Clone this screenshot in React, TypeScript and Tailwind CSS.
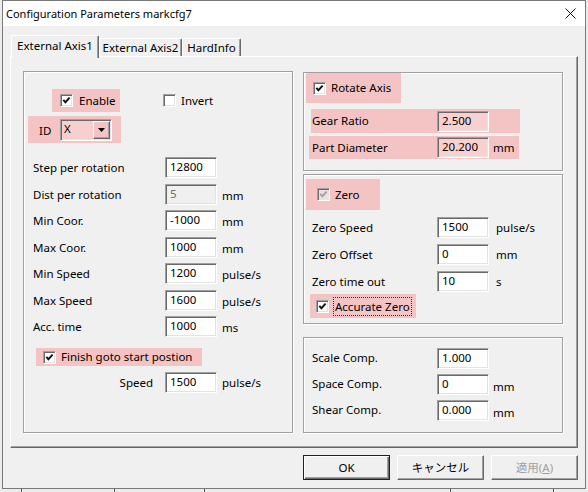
import React from 'react';

const HL = 'bg-[#f4c3c3]';

function Check({ checked = true, disabled = false }: { checked?: boolean; disabled?: boolean }) {
  return (
    <span
      className={`flex h-[13px] w-[13px] shrink-0 items-center justify-center border border-t-[#a0a0a0] border-l-[#a0a0a0] border-b-white border-r-white shadow-[inset_1px_1px_0_#696969,inset_-1px_-1px_0_#e3e3e3] ${
        disabled ? 'bg-[#efdede]' : 'bg-white'
      }`}
    >
      {checked && (
        <svg width="9" height="9" viewBox="0 0 9 9">
          <path d="M1.3 3.8 L3.4 6.2 L7.6 1.6" stroke={disabled ? '#a0a0a0' : '#111'} strokeWidth="1.9" fill="none" />
        </svg>
      )}
    </span>
  );
}

function Edit({ value, disabled = false, pink = false }: { value: string; disabled?: boolean; pink?: boolean }) {
  const bg = pink ? 'bg-[#f9d0d0]' : disabled ? 'bg-[#f0f0f0] text-[#6d6d6d]' : 'bg-white';
  return (
    <div
      className={`h-[21px] w-[52px] shrink-0 border border-t-[#a0a0a0] border-l-[#a0a0a0] border-b-white border-r-white pl-[4px] leading-[18px] shadow-[inset_1px_1px_0_#696969,inset_-1px_-1px_0_#e3e3e3] ${bg}`}
    >
      {value}
    </div>
  );
}

function Group({ className = '', children }: { className?: string; children?: React.ReactNode }) {
  return (
    <div className={`flex flex-col border border-[#a0a0a0] shadow-[inset_1px_1px_0_#fff,1px_1px_0_#fff] ${className}`}>
      {children}
    </div>
  );
}

function LeftRow({ label, value, unit, disabled }: { label: string; value: string; unit?: string; disabled?: boolean }) {
  return (
    <div className="flex h-[26.5px] items-start">
      <span className="w-[141px] pl-[9px] leading-[21px]">{label}</span>
      <Edit value={value} disabled={disabled} />
      {unit && <span className="ml-[5px] leading-[23px]">{unit}</span>}
    </div>
  );
}

function RightRow({ label, value, unit, h, unitClass = 'ml-[7px]' }: { label: string; value: string; unit?: string; h: string; unitClass?: string }) {
  return (
    <div className={`flex items-center ${h}`}>
      <span className="w-[133px] pl-[8px]">{label}</span>
      <Edit value={value} />
      {unit && <span className={unitClass}>{unit}</span>}
    </div>
  );
}

function Button({ label, def = false, disabled = false }: { label: React.ReactNode; def?: boolean; disabled?: boolean }) {
  return (
    <div
      className={`flex h-[25px] w-[87px] items-center justify-center bg-[#f0f0f0] ${
        def
          ? 'border border-[#202020] shadow-[inset_1px_1px_0_#fff,inset_-1px_-1px_0_#696969,inset_-2px_-2px_0_#a0a0a0]'
          : 'border border-t-white border-l-white border-b-[#696969] border-r-[#696969] shadow-[inset_-1px_-1px_0_#a0a0a0]'
      } ${disabled ? 'text-[#a0a0a0]' : ''}`}
    >
      {label}
    </div>
  );
}

export default function App() {
  return (
    <div className="h-[492px] w-[588px] overflow-hidden bg-[#ececec] font-['Noto_Sans','Noto_Sans_CJK_JP',sans-serif] text-[11.5px] text-black">
      <div className="ml-[2px] flex h-[489px] w-[584px] flex-col border border-[#7a7a7a] bg-[#f0f0f0]">
        {/* Title bar */}
        <div className="flex h-[25px] shrink-0 items-center justify-between bg-white pl-[3px] pr-[9px]">
          <span className="pt-[1px] text-[11px]">Configuration Parameters markcfg7</span>
          <svg width="11" height="11" viewBox="0 0 11 11">
            <path d="M0.5 0.5 L10.5 10.5 M10.5 0.5 L0.5 10.5" stroke="#111" strokeWidth="1" />
          </svg>
        </div>

        <div className="mx-[7px] mt-[9px] flex flex-col">
          {/* Tabs */}
          <div className="flex h-[21px] items-end pl-[1px]">
            <div className="relative z-10 -mb-[2px] flex h-[23px] w-[88px] items-center justify-center rounded-t-[2px] border-l border-t border-r border-l-white border-t-white border-r-[#696969] bg-[#f0f0f0] pb-[2px] shadow-[inset_-1px_0_0_#a0a0a0]">
              External Axis1
            </div>
            <div className="flex h-[18px] w-[83px] items-center justify-center rounded-t-[2px] border-l border-t border-r border-l-white border-t-white border-r-[#696969] shadow-[inset_-1px_0_0_#a0a0a0]">
              External Axis2
            </div>
            <div className="flex h-[18px] w-[59px] items-center justify-center rounded-t-[2px] border-l border-t border-r border-l-white border-t-white border-r-[#696969] shadow-[inset_-1px_0_0_#a0a0a0]">
              HardInfo
            </div>
          </div>

          {/* Tab panel */}
          <div className="flex h-[392px] w-[568px] border border-t-white border-l-white border-b-[#696969] border-r-[#696969] pl-[12px] pt-[14px] shadow-[inset_-1px_-1px_0_#a0a0a0]">
            {/* Left group */}
            <Group className="h-[362px] w-[270px]">
              <div className="mt-[17px] flex h-[23px] items-center">
                <div className={`ml-[28px] flex h-[23px] w-[68px] items-center gap-[6px] pl-[8px] ${HL}`}>
                  <Check />
                  <span>Enable</span>
                </div>
                <div className="ml-[43px] flex items-center gap-[5px]">
                  <Check checked={false} />
                  <span>Invert</span>
                </div>
              </div>

              <div className={`ml-[4px] mt-[4px] flex h-[27px] w-[93px] items-center pl-[11px] ${HL}`}>
                <span className="w-[21px] pt-[3px]">ID</span>
                <div className="flex h-[22px] w-[52px] border border-t-[#a0a0a0] border-l-[#a0a0a0] border-b-white border-r-white bg-[#f8cfcf] shadow-[inset_1px_1px_0_#696969,inset_-1px_-1px_0_#e3e3e3]">
                  <span className="flex-1 pl-[3px] leading-[18px]">X</span>
                  <span className={`my-[1px] mr-[1px] flex w-[17px] items-center justify-center border border-t-white border-l-white border-b-[#696969] border-r-[#696969] shadow-[inset_-1px_-1px_0_#a0a0a0] ${HL}`}>
                    <svg width="7" height="4" viewBox="0 0 7 4">
                      <path d="M0 0 H7 L3.5 4 Z" fill="#000" />
                    </svg>
                  </span>
                </div>
              </div>

              <div className="mt-[14px] flex flex-col">
                <LeftRow label="Step per rotation" value="12800" />
                <LeftRow label="Dist per rotation" value="5" unit="mm" disabled />
                <LeftRow label="Min Coor." value="-1000" unit="mm" />
                <LeftRow label="Max Coor." value="1000" unit="mm" />
                <LeftRow label="Min Speed" value="1200" unit="pulse/s" />
                <LeftRow label="Max Speed" value="1600" unit="pulse/s" />
                <LeftRow label="Acc. time" value="1000" unit="ms" />
              </div>

              <div className={`ml-[12px] mt-[5.5px] flex h-[18px] w-[166px] items-center gap-[5px] pl-[7px] ${HL}`}>
                <Check />
                <span>Finish goto start postion</span>
              </div>

              <div className="mt-[6px] flex items-center">
                <span className="w-[141px] pr-[12px] text-right">Speed</span>
                <Edit value="1500" />
                <span className="ml-[5px]">pulse/s</span>
              </div>
            </Group>

            {/* Right column */}
            <div className="ml-[10px] flex w-[260px] flex-col">
              <Group className="mt-[1px] h-[99px]">
                <div className={`ml-[2px] flex h-[30px] w-[95px] items-center gap-[5px] pl-[7px] ${HL}`}>
                  <Check />
                  <span>Rotate Axis</span>
                </div>
                <div className={`ml-[7px] mt-[6px] flex h-[24px] w-[209px] items-center pl-[1px] ${HL}`}>
                  <span className="w-[125px]">Gear Ratio</span>
                  <Edit value="2.500" pink />
                </div>
                <div className={`ml-[5px] mt-[3px] flex h-[23px] w-[210px] items-center pl-[3px] ${HL}`}>
                  <span className="w-[125px]">Part Diameter</span>
                  <Edit value="20.200" pink />
                  <span className="ml-[4px]">mm</span>
                </div>
              </Group>

              <Group className="mt-[3px] h-[150px]">
                <div className={`ml-[2px] mt-[4px] flex h-[31px] w-[74px] items-center gap-[5px] pl-[11px] ${HL}`}>
                  <Check disabled />
                  <span>Zero</span>
                </div>
                <div className="mt-[4px] flex flex-col">
                  <RightRow h="h-[27px]" label="Zero Speed" value="1500" unit="pulse/s" />
                  <RightRow h="h-[27px]" label="Zero Offset" value="0" unit="mm" />
                  <RightRow h="h-[27px]" label="Zero time out" value="10" unit="s" />
                </div>
                <div className={`ml-[6px] -mt-[1px] flex h-[24px] w-[106px] items-center gap-[4px] pl-[6px] ${HL}`}>
                  <Check />
                  <span className="border border-dotted border-[#333] px-[1px] leading-[17px]">Accurate Zero</span>
                </div>
              </Group>

              <Group className="mt-[13px] h-[96px]">
                <div className="mt-[7px] flex flex-col">
                  <RightRow h="h-[26px]" label="Scale Comp." value="1.000" />
                  <RightRow h="h-[26px]" label="Space Comp." value="0" unit="mm" unitClass="ml-[4px] pt-[6px]" />
                  <RightRow h="h-[26px]" label="Shear Comp." value="0.000" unit="mm" unitClass="ml-[4px] pt-[6px]" />
                </div>
              </Group>
            </div>
          </div>

          {/* Buttons */}
          <div className="mt-[7px] flex justify-end gap-[7px]">
            <Button label="OK" def />
            <Button label="キャンセル" />
            <Button
              disabled
              label={
                <span>
                  適用(<span className="underline">A</span>)
                </span>
              }
            />
          </div>
        </div>
      </div>

      {/* Background behind the dialog */}
      <div className="flex h-[3px]">
        <div className="ml-[21px] w-px bg-[#555]" />
        <div className="ml-[92px] w-px bg-[#555]" />
        <div className="ml-[89px] w-px bg-[#555]" />
        <div className="ml-[245px] w-px bg-[#555]" />
        <div className="ml-[102px] w-px bg-[#555]" />
      </div>
    </div>
  );
}
